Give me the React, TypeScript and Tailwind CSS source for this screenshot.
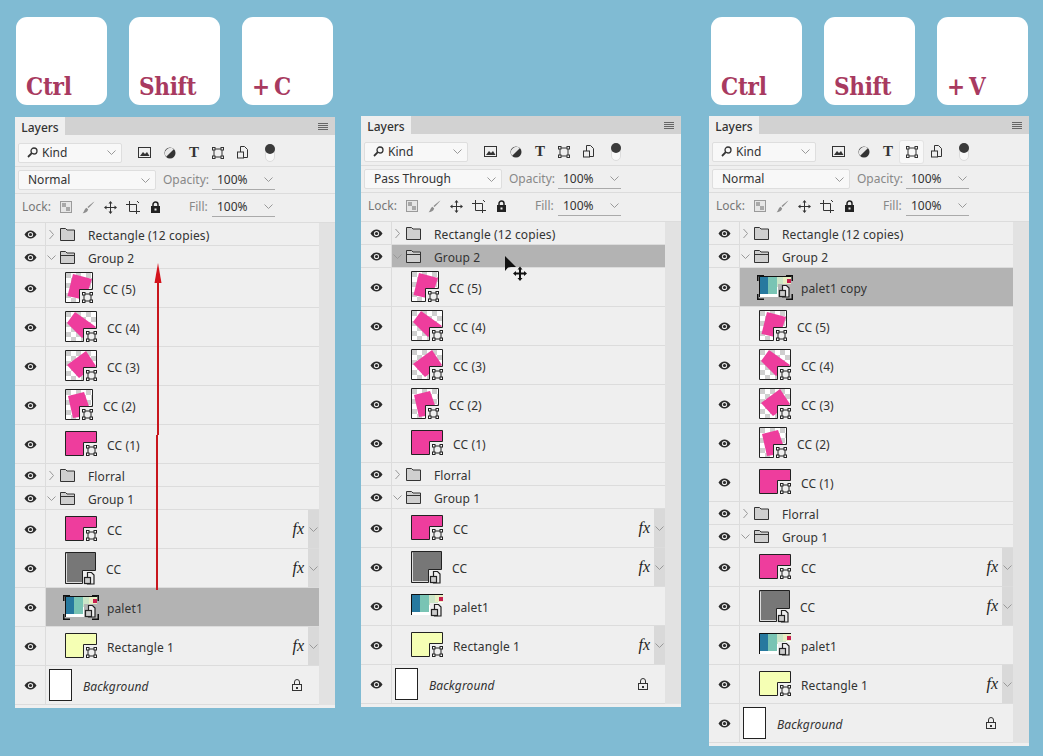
import { ReactNode } from "react";

const PINK = "#ee3d9d";
const INK = "#222";

type ThumbKind = "cc5" | "cc4" | "cc3" | "cc2" | "cc1" | "cc" | "grey" | "palet" | "rect" | "bg";

type Row =
  | { type: "group"; name: string; open: boolean; selected?: boolean }
  | { type: "layer"; name: string; thumb: ThumbKind; fx?: boolean; selected?: boolean; italic?: boolean; locked?: boolean };

const treeTop: Row[] = [
  { type: "group", name: "Rectangle (12 copies)", open: false },
  { type: "group", name: "Group 2", open: true },
];

const ccRows: Row[] = [
  { type: "layer", name: "CC (5)", thumb: "cc5" },
  { type: "layer", name: "CC (4)", thumb: "cc4" },
  { type: "layer", name: "CC (3)", thumb: "cc3" },
  { type: "layer", name: "CC (2)", thumb: "cc2" },
  { type: "layer", name: "CC (1)", thumb: "cc1" },
  { type: "group", name: "Florral", open: false },
  { type: "group", name: "Group 1", open: true },
  { type: "layer", name: "CC", thumb: "cc", fx: true },
  { type: "layer", name: "CC", thumb: "grey", fx: true },
];

const tail: Row[] = [
  { type: "layer", name: "Rectangle 1", thumb: "rect", fx: true },
  { type: "layer", name: "Background", thumb: "bg", italic: true, locked: true },
];

const firstRows: Row[] = [...treeTop, ...ccRows, { type: "layer", name: "palet1", thumb: "palet", selected: true }, ...tail];
const secondRows: Row[] = [
  treeTop[0],
  { type: "group", name: "Group 2", open: true, selected: true },
  ...ccRows,
  { type: "layer", name: "palet1", thumb: "palet" },
  ...tail,
];
const thirdRows: Row[] = [
  ...treeTop,
  { type: "layer", name: "palet1 copy", thumb: "palet", selected: true },
  ...ccRows,
  { type: "layer", name: "palet1", thumb: "palet" },
  ...tail,
];

const Eye = () => (
  <svg width="13" height="9" viewBox="0 0 13 9">
    <path d="M.5 4.500C2.200 1.800 4.200.5 6.500.5s4.300 1.300 6 4c-1.700 2.700-3.700 4-6 4s-4.300-1.300-6-4z" fill="#2b2b2b" />
    <circle cx="6.500" cy="4.500" r="2.600" fill="#efefef" />
    <circle cx="6.500" cy="4.500" r="1.600" fill="#2b2b2b" />
  </svg>
);

const Chevron = ({ open }: { open: boolean }) => (
  <svg width="9" height="11" viewBox="0 0 9 11" fill="none" stroke="#999">
    {open ? <path d="M.5 3.500l4 4 4-4" /> : <path d="M2.500 1l4 4.500-4 4.500" />}
  </svg>
);

const Folder = ({ open }: { open: boolean }) => (
  <svg width="15" height="13" viewBox="0 0 15 13" stroke="#333" fill="#cfcfcf">
    <path d="M.5 12.500V.5h5l1.500 1.500h7.500v10.500z" />
    {open && <path d="M.5 4.500h14" fill="none" />}
  </svg>
);

const ShapeBadge = ({ x, y }: { x: number; y: number }) => (
  <g transform={`translate(${x} ${y})`} fill="#fff" stroke={INK}>
    <path d="M2 2h7v7H2z" fill="none" />
    <rect x=".5" y=".5" width="2.500" height="2.500" />
    <rect x="8" y=".5" width="2.500" height="2.500" />
    <rect x=".5" y="8" width="2.500" height="2.500" />
    <rect x="8" y="8" width="2.500" height="2.500" />
  </g>
);

const SmartBadge = ({ x, y }: { x: number; y: number }) => (
  <g transform={`translate(${x} ${y})`} fill="#efefef" stroke={INK} strokeWidth="1.200">
    <path d="M3.500.5h4l2.500 2.500v9H3.500z" />
    <rect x=".5" y="5.500" width="6" height="6" fill="#ccc" />
  </g>
);

const checker = (w: number, h: number) => {
  const out: ReactNode[] = [];
  for (let r = 0; r * 5 < h; r++) {
    for (let c = 0; c * 5 < w; c++) {
      if ((r + c) % 2 === 0) {
        out.push(<rect key={`${r}-${c}`} x={c * 5 + 1} y={r * 5 + 1} width="5" height="5" fill="#cfcfcf" />);
      }
    }
  }
  return out;
};

// thumbnail frame with the cut-out corner for the layer badge
const Frame = ({ w, h, fill, children, badge }: { w: number; h: number; fill: string; children?: ReactNode; badge: "shape" | "smart" }) => {
  const notch = `M.5 .5H${w - 0.5}V${h - 13.5}H${w - 13.5}V${h - 0.5}H.5z`;
  return (
    <svg width={w} height={h + 1} viewBox={`0 0 ${w} ${h + 1}`} className="shrink-0">
      <path d={notch} fill={fill} />
      {children}
      <path d={notch} fill="none" stroke={INK} />
      {badge === "shape" ? <ShapeBadge x={w - 11} y={h - 11} /> : <SmartBadge x={w - 12} y={h - 12} />}
    </svg>
  );
};

const Rotated = ({ w, h, points }: { w: number; h: number; points: string }) => (
  <Frame w={w} h={h} fill="#fff" badge="shape">
    {checker(w - 2, h - 2)}
    <polygon points={points} fill={PINK} />
    <rect x={w - 13} y={h - 13} width="13" height="14" fill="#efefef" />
    <rect x={w - 1} y="0" width="1" height={h - 13} fill="#fff" />
  </Frame>
);

const PaletImage = () => (
  <>
    <rect x="0" y="0" width="32" height="21" fill="#fff" />
    <rect x="0" y="0" width="9" height="18" fill="#27799f" />
    <rect x="9" y="0" width="9" height="18" fill="#79c4b4" />
    <rect x="18" y="0" width="9" height="11" fill="#cbe6c8" />
    <rect x="24" y="0" width="8" height="8" fill="#e9efc4" />
    <rect x="28" y="3" width="4" height="4" fill="#c8204f" />
    <path d="M.5 21V.5H32" fill="none" stroke="#111" />
  </>
);

const Palet = ({ selected }: { selected?: boolean }) =>
  selected ? (
    <svg width="36" height="25" viewBox="0 0 36 25" className="shrink-0">
      <g transform="translate(2 1)">
        <PaletImage />
      </g>
      <rect x="21" y="9" width="13" height="15" fill="#b3b3b3" />
      <path d="M.75 6V.75H7M29 .75h6.250V6M.75 19v5.250H7M29 24.250h6.250V19" fill="none" stroke="#111" strokeWidth="1.500" />
      <SmartBadge x={22} y={10} />
    </svg>
  ) : (
    <svg width="32" height="24" viewBox="0 0 32 24" className="shrink-0">
      <PaletImage />
      <rect x="19" y="9" width="13" height="15" fill="#efefef" />
      <SmartBadge x={20} y={10} />
    </svg>
  );

const Thumb = ({ kind, selected }: { kind: ThumbKind; selected?: boolean }) => {
  switch (kind) {
    case "cc5":
      return <Rotated w={28} h={31} points="8,2 27,7 20,28 2.500,24" />;
    case "cc4":
      return <Rotated w={32} h={31} points="10,1 31,16 17,27 2,12" />;
    case "cc3":
      return <Rotated w={32} h={31} points="21,1 31,16 14,28 2,15" />;
    case "cc2":
      return <Rotated w={28} h={31} points="3,7 19,3 27,26 8,29" />;
    case "cc1":
    case "cc":
      return <Frame w={32} h={25} fill={PINK} badge="shape" />;
    case "grey":
      return (
        <Frame w={31} h={32} fill="#777" badge="smart">
          <path d="M1.500 1.500V31M1.500 30.500H17" stroke="#ddd" fill="none" />
        </Frame>
      );
    case "rect":
      return <Frame w={32} h={25} fill="#f5ffb4" badge="shape" />;
    case "palet":
      return <Palet selected={selected} />;
    case "bg":
      return <div className="h-[32px] w-[23px] shrink-0 border border-[#222] bg-white" />;
  }
};

const LockSmall = () => (
  <svg width="10" height="12" viewBox="0 0 10 12" fill="none" stroke="#333">
    <rect x=".5" y="5.500" width="9" height="6" />
    <path d="M2.500 5.500V3a2.500 2.500 0 0 1 5 0v2.500" />
    <rect x="4" y="8" width="2" height="2" fill="#333" stroke="none" />
  </svg>
);

const thumbGap = (kind: ThumbKind, selected?: boolean) => {
  if (kind === "bg") return "pl-[3px] gap-[11px]";
  if (kind === "palet" && selected) return "pl-[17px] gap-[8px]";
  return "pl-[19px] gap-[10px]";
};

const LayerRow = ({ row }: { row: Row }) => {
  const bg = row.selected ? "bg-[#b3b3b3]" : "bg-[#efefef]";
  if (row.type === "group") {
    return (
      <div className="flex h-[23px] border-b border-[#dcdcdc]">
        <div className="flex w-[31px] items-center justify-center border-r border-[#dcdcdc]">
          <Eye />
        </div>
        <div className={`flex flex-1 items-center ${bg}`}>
          <span className="ml-[1px] w-[11px]"><Chevron open={row.open} /></span>
          <span className="ml-[2px] flex"><Folder open={row.open} /></span>
          <span className="ml-[13px] pt-[4px] text-[12px] tracking-[0.12px] text-[#333]">{row.name}</span>
        </div>
      </div>
    );
  }
  return (
    <div className="flex h-[39px] border-b border-[#dcdcdc]">
      <div className="flex w-[31px] items-center justify-center border-r border-[#dcdcdc]">
        <Eye />
      </div>
      <div className={`flex flex-1 items-center ${bg} ${thumbGap(row.thumb, row.selected)}`}>
        <Thumb kind={row.thumb} selected={row.selected} />
        <span className={`pt-[4px] text-[12px] tracking-[0.12px] text-[#333] ${row.italic ? "italic" : ""}`}>{row.name}</span>
        {row.fx && (
          <div className="ml-auto flex h-full items-center">
            <span className="pr-[4px] font-['Liberation_Serif'] text-[16px] italic text-[#222]">fx</span>
            <span className="flex h-full w-[11px] items-center justify-center bg-[#d9d9d9]">
              <Chevron open />
            </span>
          </div>
        )}
        {row.locked && (
          <span className="ml-auto mr-[17px] flex">
            <LockSmall />
          </span>
        )}
      </div>
    </div>
  );
};

const Select = ({ label, width, search }: { label: string; width: string; search?: boolean }) => (
  <div className={`flex h-[20px] items-center justify-between rounded-[2px] border border-[#dedede] bg-[#f8f8f8] pr-[5px] ${search ? "pl-[8px]" : "pl-[9px]"} ${width}`}>
    <span className="flex items-center gap-[4px] text-[12px] text-[#333]">
      {search && (
        <svg width="11" height="11" viewBox="0 0 11 11" fill="none" stroke="#333" strokeWidth="1.300">
          <circle cx="7" cy="4" r="3" />
          <path d="M4.800 6.200L1 10" strokeWidth="1.800" />
        </svg>
      )}
      {label}
    </span>
    <Chevron open />
  </div>
);

const ValueField = () => (
  <div className="flex h-[20px] w-[63px] items-center justify-between border-b border-[#aaa] pl-[5px] pr-[2px]">
    <span className="text-[12px] text-[#333]">100%</span>
    <Chevron open />
  </div>
);

const FilterIcons = ({ activeShape }: { activeShape?: boolean }) => (
  <div className="ml-[10px] flex items-center">
    <span className="flex w-[25px] justify-center">
      <svg width="13" height="11" viewBox="0 0 13 11" fill="none" stroke="#333">
        <rect x=".5" y=".5" width="12" height="10" />
        <path d="M2 9l3-4 2 2 2-2 2.500 4z" fill="#333" stroke="none" />
      </svg>
    </span>
    <span className="flex w-[25px] justify-center">
      <svg width="12" height="12" viewBox="0 0 12 12">
        <circle cx="6" cy="6" r="5.500" fill="#333" />
        <path d="M2.200 9.800A5.400 5.400 0 0 1 9.800 2.200z" fill="#e8e8e8" />
      </svg>
    </span>
    <span className="flex w-[24px] justify-center font-['Liberation_Serif'] text-[15px] font-bold leading-none text-[#333]">T</span>
    <span className={`flex h-[22px] w-[23px] items-center justify-center rounded-[2px] ${activeShape ? "bg-[#f8f8f8] shadow-[0_0_0_1px_#e4e4e4]" : ""}`}>
      <svg width="12" height="12" viewBox="0 0 12 12" fill="#efefef" stroke="#333">
        <path d="M2 2h8v8H2z" fill="none" />
        <rect x=".5" y=".5" width="2.500" height="2.500" />
        <rect x="9" y=".5" width="2.500" height="2.500" />
        <rect x=".5" y="9" width="2.500" height="2.500" />
        <rect x="9" y="9" width="2.500" height="2.500" />
      </svg>
    </span>
    <span className="flex w-[26px] justify-center">
      <svg width="11" height="13" viewBox="0 0 11 13" fill="#efefef" stroke="#333">
        <path d="M3.500.5h4l3 3v8h-7z" />
        <rect x=".5" y="6" width="6" height="6" />
      </svg>
    </span>
    <span className="relative ml-[10px] h-[18px] w-[10px] rounded-full border border-[#dcdcdc] bg-[#f8f8f8]">
      <span className="absolute -left-px -top-px h-[10px] w-[10px] rounded-full bg-[#3a3a3a]" />
    </span>
  </div>
);

const LockIcons = () => (
  <div className="ml-[1px] flex items-center">
    <span className="flex w-[22px] justify-center">
      <svg width="12" height="12" viewBox="0 0 12 12">
        <rect x=".5" y=".5" width="11" height="11" fill="#e6e6e6" stroke="#9a9a9a" />
        <path d="M2 2h4v4H2zM6 6h4v4H6z" fill="#a8a8a8" />
      </svg>
    </span>
    <span className="flex w-[22px] justify-center">
      <svg width="13" height="13" viewBox="0 0 13 13">
        <path d="M12.500.5C11 2.500 8.500 5 6.500 7L5.500 6c2-2 5-4.500 7-5.500zM4.500 6.800l1.700 1.700C5.500 11 3 12.300.5 12.300 2.300 11 2.500 7.500 4.500 6.800z" fill="#8e8e8e" />
      </svg>
    </span>
    <span className="flex w-[22px] justify-center">
      <svg width="13" height="13" viewBox="0 0 13 13" fill="#333">
        <path d="M6 2h1v9H6zM2 6h9v1H2z" />
        <path d="M6.500 0l2 2.500h-4zM6.500 13l-2-2.500h4zM0 6.500l2.500-2v4zM13 6.500l-2.500 2v-4z" />
      </svg>
    </span>
    <span className="flex w-[23px] justify-center">
      <svg width="14" height="13" viewBox="0 0 14 13" fill="none" stroke="#333">
        <path d="M3.500 0v10.500H14M0 3.500h10.500V13" />
        <path d="M11 0l2 2" />
      </svg>
    </span>
    <span className="flex w-[22px] justify-center">
      <svg width="11" height="12" viewBox="0 0 11 12">
        <path d="M3 5V3.500a2.500 2.500 0 0 1 5 0V5" fill="none" stroke="#222" strokeWidth="1.500" />
        <rect x="1" y="5" width="9" height="7" fill="#222" />
        <rect x="4.500" y="7.500" width="2" height="2" fill="#efefef" />
      </svg>
    </span>
  </div>
);

const Panel = ({ rows, mode, activeShape, children }: { rows: Row[]; mode: string; activeShape?: boolean; children?: ReactNode }) => (
  <div className="relative w-[320px] bg-[#efefef] pb-[3px]">
    <div className="flex h-[18px] items-stretch justify-between bg-[#d2d2d2] pr-[7px]">
      <div className="flex w-[50px] items-center justify-center bg-[#efefef] pt-[4px] text-[12px] font-medium text-[#333]">Layers</div>
      <div className="flex flex-col justify-center gap-[1px]">
        <span className="h-px w-[10px] bg-[#666]" />
        <span className="h-px w-[10px] bg-[#666]" />
        <span className="h-px w-[10px] bg-[#666]" />
        <span className="h-px w-[10px] bg-[#666]" />
      </div>
    </div>
    <div className="flex h-[32px] items-center border-b border-[#dcdcdc] pl-[3px] pt-[4px]">
      <Select label="Kind" width="w-[104px]" search />
      <FilterIcons activeShape={activeShape} />
    </div>
    <div className="flex h-[27px] items-center border-b border-[#dcdcdc] pl-[3px]">
      <Select label={mode} width="w-[138px]" />
      <span className="ml-[7px] w-[49px] text-[12px] text-[#888]">Opacity:</span>
      <ValueField />
    </div>
    <div className="flex h-[28px] items-center pb-[2px] pl-[7px]">
      <span className="w-[32px] text-[12px] text-[#777]">Lock:</span>
      <LockIcons />
      <span className="ml-[23px] w-[23px] text-[12px] text-[#888]">Fill:</span>
      <ValueField />
    </div>
    <div className="flex border-t border-[#dcdcdc]">
      <div className="w-[304px]">
        {rows.map((row, i) => (
          <LayerRow key={i} row={row} />
        ))}
      </div>
      <div className="flex-1 bg-[#e2e2e2]" />
    </div>
    {children}
  </div>
);

const Key = ({ label }: { label: string }) => (
  <div className="flex h-[88px] w-[91px] items-end rounded-[11px] bg-white pb-[6px] pl-[10px] font-['DejaVu_Serif'] text-[24px] font-bold tracking-[-0.3px] text-[#a83a60] [font-stretch:condensed] [word-spacing:-3px]">
    {label}
  </div>
);

const RedArrow = () => (
  <svg width="10" height="330" viewBox="0 0 10 330" className="absolute left-[138px] top-[146px]">
    <path d="M5 10V172M4 172V327" stroke="#c8161d" strokeWidth="2" />
    <path d="M5 0L8.500 20H1.500z" fill="#d4131c" />
  </svg>
);

const Cursor = () => (
  <svg width="24" height="26" viewBox="0 0 24 26" className="absolute left-[144px] top-[140px]">
    <path d="M0 0L11 11H6L3 11.500 0 15z" fill="#111" />
    <path d="M14 13h2v9h-2zM10 16.500h10v2H10z" fill="#111" />
    <path d="M15 10.500l2.500 3h-5zM15 25l-2.500-3h5zM8 17.500l3-2.500v5zM22 17.500l-3 2.500v-5z" fill="#111" />
  </svg>
);

export default function App() {
  return (
    <div className="flex h-[756px] w-[1043px] overflow-hidden bg-[#80bbd3] font-['Noto_Sans',sans-serif] leading-none">
      <div className="ml-[15px] flex w-[320px] flex-col pt-[17px]">
        <div className="flex gap-[22px] pl-px">
          <Key label="Ctrl" />
          <Key label="Shift" />
          <Key label="+ C" />
        </div>
        <div className="mt-[12px]">
          <Panel rows={firstRows} mode="Normal">
            <RedArrow />
          </Panel>
        </div>
      </div>
      <div className="ml-[26px] w-[320px] pt-[116px]">
        <Panel rows={secondRows} mode="Pass Through">
          <Cursor />
        </Panel>
      </div>
      <div className="ml-[28px] flex w-[320px] flex-col pt-[17px]">
        <div className="flex gap-[22px] pl-[2px]">
          <Key label="Ctrl" />
          <Key label="Shift" />
          <Key label="+ V" />
        </div>
        <div className="mt-[11px]">
          <Panel rows={thirdRows} mode="Normal" activeShape />
        </div>
      </div>
    </div>
  );
}
